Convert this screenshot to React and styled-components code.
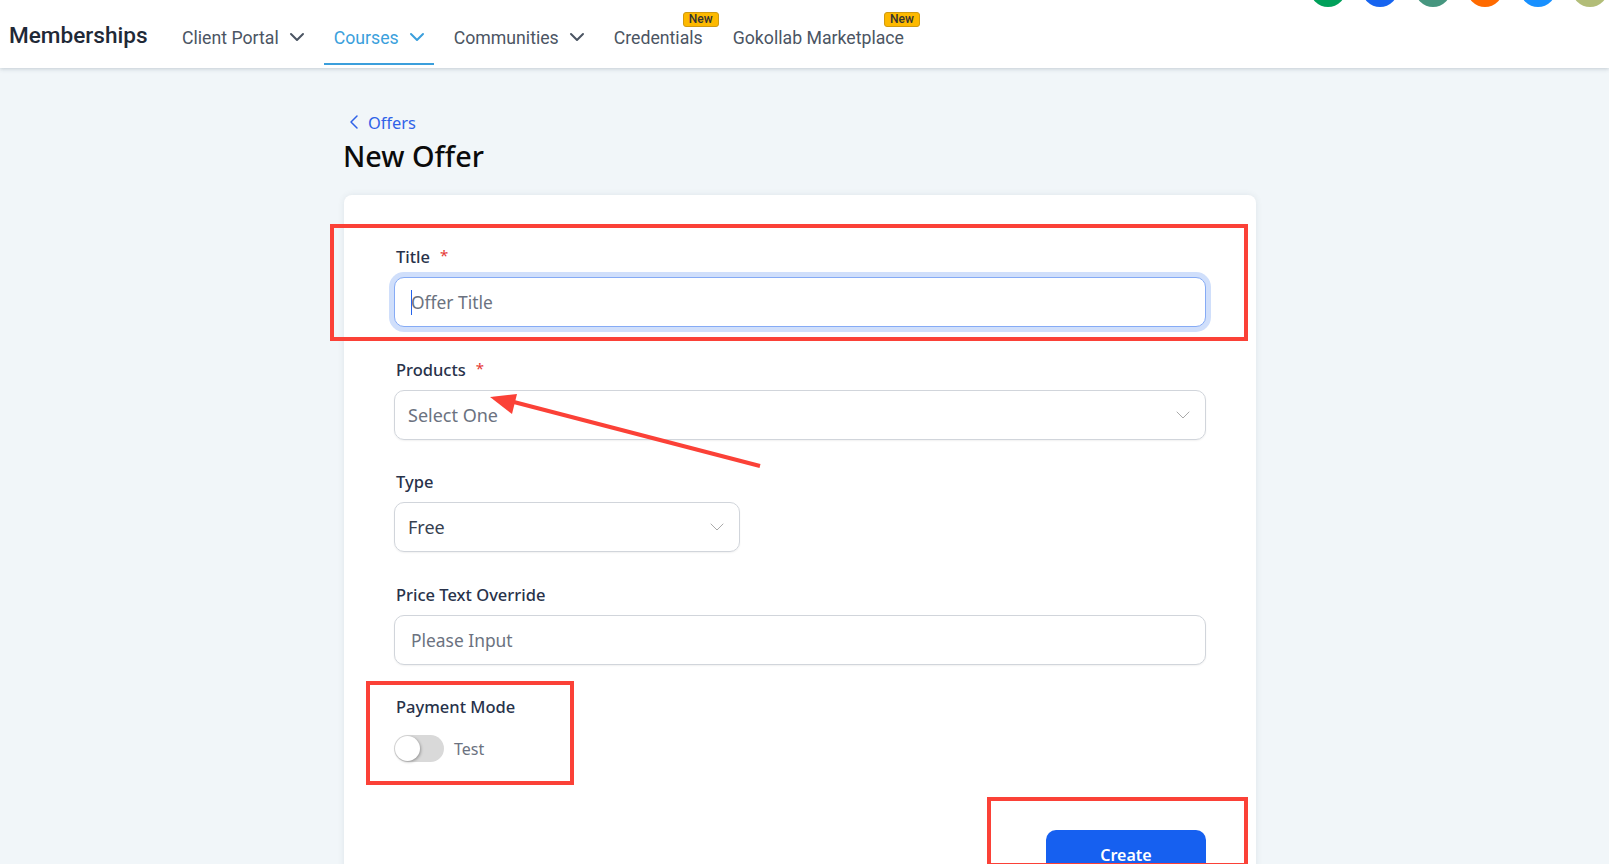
import styled, { createGlobalStyle } from "styled-components";
import { ChevronDown, ChevronLeft } from "lucide-react";

const GlobalStyle = createGlobalStyle`
  html, body {
    margin: 0;
    height: 100%;
    overflow: hidden;
  }
  body {
    background: #f1f6f9;
    font-family: "Noto Sans", sans-serif;
  }
  * {
    box-sizing: border-box;
  }
`;

const Page = styled.div`
  position: relative;
  height: 864px;
  overflow: hidden;
`;

const Header = styled.header`
  height: 68px;
  background: #fff;
  box-shadow: 0 1px 4px rgba(60, 80, 100, 0.25);
  display: flex;
  overflow: hidden;
  padding-left: 9px;
`;

const Logo = styled.div`
  width: 163px;
  font-family: Roboto, sans-serif;
  font-weight: 500;
  font-size: 22.6px;
  color: #1f2937;
  line-height: 68px;
  margin-top: 2px;
`;

const Nav = styled.nav`
  display: flex;
  flex: 1;
`;

const NavItem = styled.a`
  position: relative;
  display: flex;
  align-items: center;
  gap: 6px;
  height: 65px;
  padding: 12px ${(props) => (props.$hasChevron ? 5 : 10)}px 0 10px;
  margin-right: 10px;
  font-family: Roboto, sans-serif;
  font-weight: 450;
  font-size: 17.7px;
  color: ${(props) => (props.$active ? "#3b9fdc" : "#4b5563")};
  border-bottom: 2px solid ${(props) => (props.$active ? "#3b9fdc" : "transparent")};
  svg {
    margin-top: -2px;
  }
`;

const NewBadge = styled.span`
  position: absolute;
  top: 12px;
  right: -6px;
  width: 36px;
  height: 15px;
  border-radius: 3px;
  background: #fdb900;
  border: 1px solid #d09a10;
  color: #333;
  font-size: 12px;
  font-weight: 500;
  line-height: 13px;
  text-align: center;
`;

const Avatars = styled.div`
  display: flex;
  gap: 16.4px;
  margin-top: -29px;
  margin-right: 1px;
`;

const Avatar = styled.span`
  width: 36px;
  height: 36px;
  border-radius: 50%;
  background: ${(props) => props.$color};
`;

const Main = styled.main`
  width: 912px;
  margin-left: 344px;
`;

const Back = styled.a`
  display: flex;
  align-items: center;
  gap: 2px;
  margin-top: 42px;
  margin-left: -2px;
  height: 24px;
  font-size: 16.4px;
  color: #2f62e8;
`;

const Heading = styled.h1`
  margin: 2px 0 0 -1px;
  font-size: 28.8px;
  line-height: 40px;
  font-weight: 500;
  color: #0b0b0b;
`;

const Card = styled.section`
  margin-top: 19px;
  height: 700px;
  background: #fff;
  border-radius: 8px;
  box-shadow: 0 0 6px rgba(60, 80, 100, 0.1);
  padding: 50px 50px 0;
`;

const Field = styled.div`
  margin-bottom: 30.6px;
`;

const Label = styled.label`
  display: block;
  height: 32px;
  padding-left: 2px;
  font-size: 16.5px;
  font-weight: 500;
  line-height: 23px;
  color: #28324a;
`;

const Required = styled.span`
  position: relative;
  top: -2px;
  margin-left: 10px;
  font-size: 15px;
  font-weight: 400;
  color: #e53935;
`;

const InputWrap = styled.div`
  position: relative;
`;

const Input = styled.input`
  display: block;
  width: 100%;
  height: 50px;
  padding: 0 16px;
  background: #fff;
  border: 1px solid ${(props) => (props.$focused ? "#86abf5" : "#d1d5db")};
  border-radius: 10px;
  box-shadow: ${(props) => (props.$focused ? "0 0 0 5px #d0dffb" : "0 1px 2px rgba(0,0,0,0.06)")};
  font-family: inherit;
  font-size: 17.4px;
  outline: none;
  &::placeholder {
    color: #6b7280;
    opacity: 1;
  }
`;

const Caret = styled.span`
  position: absolute;
  left: 17px;
  top: 13px;
  width: 1px;
  height: 25px;
  background: #2563eb;
`;

const Select = styled.div`
  display: flex;
  align-items: center;
  justify-content: space-between;
  width: ${(props) => props.$width || "100%"};
  height: 50px;
  padding: 0 10px 0 13px;
  border: 1px solid #d1d5db;
  border-radius: 10px;
  box-shadow: 0 1px 2px rgba(0, 0, 0, 0.06);
  font-size: 18px;
  color: ${(props) => (props.$muted ? "#6b7280" : "#374151")};
`;

const ToggleRow = styled.div`
  display: flex;
  align-items: center;
  gap: 10px;
  margin-top: 8px;
`;

const Toggle = styled.span`
  display: block;
  width: 50px;
  height: 27px;
  padding: 1px;
  border-radius: 14px;
  background: #d9d9d9;
`;

const Knob = styled.span`
  display: block;
  width: 25px;
  height: 25px;
  border-radius: 50%;
  background: #fff;
  box-shadow: 1px 1px 3px rgba(0, 0, 0, 0.3);
`;

const ToggleText = styled.span`
  font-size: 16px;
  color: #6b7280;
`;

const Actions = styled.div`
  display: flex;
  justify-content: flex-end;
  margin-top: 68px;
`;

const CreateButton = styled.button`
  width: 160px;
  height: 50px;
  border: none;
  border-radius: 10px;
  background: #1660f0;
  color: #fff;
  font-family: inherit;
  font-size: 16px;
  font-weight: 600;
`;

const Mark = styled.div`
  position: absolute;
  left: ${(props) => props.$x}px;
  top: ${(props) => props.$y}px;
  width: ${(props) => props.$w}px;
  height: ${(props) => props.$h}px;
  border: 4px solid #fb4137;
  pointer-events: none;
`;

const Arrow = styled.svg`
  position: absolute;
  left: 480px;
  top: 385px;
`;

const navItems = [
  { label: "Client Portal", chevron: true },
  { label: "Courses", chevron: true, active: true },
  { label: "Communities", chevron: true },
  { label: "Credentials", badge: true },
  { label: "Gokollab Marketplace", badge: true },
];

const avatars = ["#00a05a", "#1664f0", "#46967f", "#ff6a00", "#1890ff", "#b2bd78"];

const App = () => {
  return (
    <Page>
      <GlobalStyle />
      <Header>
        <Logo>Memberships</Logo>
        <Nav>
          {navItems.map((item) => (
            <NavItem key={item.label} $active={item.active} $hasChevron={item.chevron}>
              {item.label}
              {item.chevron && <ChevronDown size={24} strokeWidth={2} />}
              {item.badge && <NewBadge>New</NewBadge>}
            </NavItem>
          ))}
        </Nav>
        <Avatars>
          {avatars.map((color) => (
            <Avatar key={color} $color={color} />
          ))}
        </Avatars>
      </Header>
      <Main>
        <Back>
          <ChevronLeft size={24} strokeWidth={1.5} />
          Offers
        </Back>
        <Heading>New Offer</Heading>
        <Card>
          <Field>
            <Label>
              Title<Required>*</Required>
            </Label>
            <InputWrap>
              <Input $focused placeholder="Offer Title" />
              <Caret />
            </InputWrap>
          </Field>
          <Field>
            <Label>
              Products<Required>*</Required>
            </Label>
            <Select $muted>
              Select One
              <ChevronDown size={24} strokeWidth={1} color="#aaa" />
            </Select>
          </Field>
          <Field>
            <Label>Type</Label>
            <Select $width="346px">
              Free
              <ChevronDown size={24} strokeWidth={1} color="#aaa" />
            </Select>
          </Field>
          <Field>
            <Label>Price Text Override</Label>
            <Input placeholder="Please Input" />
          </Field>
          <Field>
            <Label>Payment Mode</Label>
            <ToggleRow>
              <Toggle>
                <Knob />
              </Toggle>
              <ToggleText>Test</ToggleText>
            </ToggleRow>
          </Field>
          <Actions>
            <CreateButton>Create</CreateButton>
          </Actions>
        </Card>
      </Main>
      <Mark $x={330} $y={224} $w={918} $h={117} />
      <Mark $x={366} $y={681} $w={208} $h={104} />
      <Mark $x={987} $y={797} $w={261} $h={70} />
      <Arrow width="290" height="90" viewBox="0 0 290 90">
        <line x1="280" y1="81" x2="30" y2="16" stroke="#fb4137" strokeWidth="4" />
        <polygon points="10,12 37,9 32,29" fill="#fb4137" />
      </Arrow>
    </Page>
  );
};

export default App;
